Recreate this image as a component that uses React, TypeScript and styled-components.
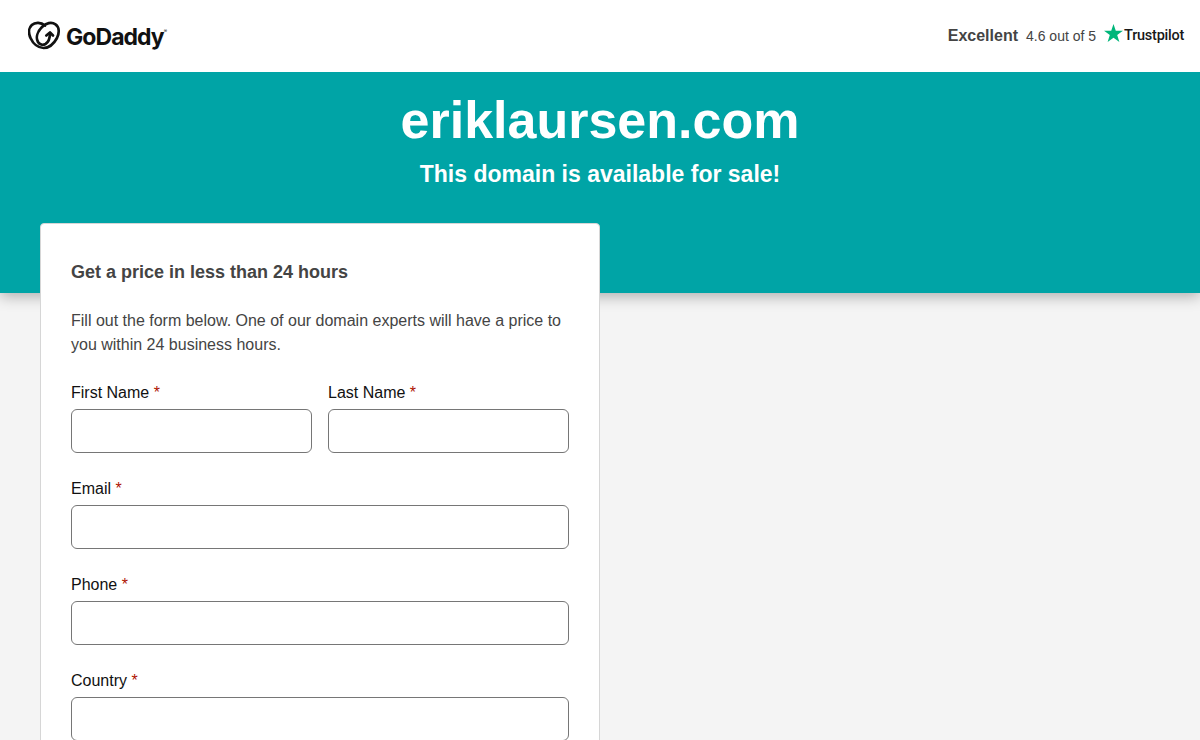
import React from 'react';
import styled, { createGlobalStyle } from 'styled-components';

const Global = createGlobalStyle`
    html, body {
        margin: 0;
        height: 740px;
        overflow: hidden;
        background: #f4f4f4;
        font-family: "Liberation Sans", Arial, sans-serif;
    }
`;
const Page = styled.div`
    height: 740px;
    overflow: hidden;
`;
const Header = styled.header`
    position: relative;
    z-index: 1;
    display: flex;
    justify-content: space-between;
    align-items: center;
    height: 72px;
    background: #fff;
    padding: 0 16px 0 28px;
    box-sizing: border-box;
`;
const Logo = styled.div`
    display: flex;
    align-items: center;
    gap: 5px;
    margin-top: 1px;
    svg {
        margin-top: -2px;
    }
`;
const LogoWord = styled.span`
    font-family: "Inter", "Liberation Sans", sans-serif;
    font-size: 23px;
    font-weight: 700;
    letter-spacing: -0.95px;
    color: #111;
    sup {
        font-size: 5px;
        font-weight: 400;
        letter-spacing: 0;
        vertical-align: 12px;
        line-height: 0;
    }
`;
const Rating = styled.div`
    display: flex;
    align-items: center;
    margin-top: -2px;
`;
const Excellent = styled.strong`
    font-size: 16px;
    color: #444;
    margin-right: 8px;
    margin-top: 1px;
`;
const Score = styled.span`
    font-size: 14px;
    color: #444;
    margin-right: 8px;
    margin-top: 2px;
`;
const Trustpilot = styled.span`
    display: flex;
    align-items: center;
    gap: 1px;
    font-size: 14.5px;
    font-weight: 500;
    letter-spacing: -0.25px;
    color: #191919;
    font-family: "Roboto", "Liberation Sans", sans-serif;
    svg {
        margin-top: -5px;
    }
`;
const Hero = styled.section`
    height: 221px;
    background: #00a4a6;
    box-shadow: 0 3px 14px rgba(0, 0, 0, 0.3);
    text-align: center;
    color: #fff;
    padding-top: 18px;
    box-sizing: border-box;
`;
const Domain = styled.h1`
    margin: 0;
    font-size: 52px;
    line-height: 60px;
    font-weight: 700;
`;
const Tagline = styled.h2`
    margin: 10px 0 0;
    font-size: 23px;
    line-height: 28px;
    font-weight: 700;
`;
const Card = styled.form`
    position: relative;
    width: 560px;
    margin: -70px 0 0 40px;
    padding: 36px 30px 40px;
    box-sizing: border-box;
    background: #fff;
    border: 1px solid #d6d6d6;
    border-radius: 4px;
`;
const Title = styled.h3`
    margin: 0;
    font-size: 18px;
    line-height: 24px;
    font-weight: 700;
    color: #444;
`;
const Intro = styled.p`
    margin: 25px 0 0;
    font-size: 16px;
    line-height: 24px;
    color: #444;
`;
const Fields = styled.div`
    display: grid;
    grid-template-columns: 1fr 1fr;
    gap: 26px 16px;
    margin-top: 26px;
`;
const Field = styled.label<{ $wide?: boolean }>`
    display: flex;
    flex-direction: column;
    grid-column: ${(p) => (p.$wide ? '1 / -1' : 'auto')};
    font-size: 16px;
    line-height: 20px;
    color: #111;
`;
const Required = styled.span`
    color: #ae1302;
`;
const Input = styled.input`
    height: 44px;
    margin-top: 6px;
    padding: 0 10px;
    box-sizing: border-box;
    width: 100%;
    border: 1px solid #767676;
    border-radius: 6px;
    background: #fff;
`;

const GoDaddyMark = () => (
    <svg width="33" height="29" viewBox="0 0 33 29" fill="none" stroke="#111" strokeWidth="2.7" strokeLinecap="round" strokeLinejoin="round">
        <path d="M17 4.500C13 1 7 1 3.800 4 .5 7 .5 12.500 2.500 17 5 22.500 10 27 15.500 27 21 27 26 22.500 29 17 31.500 12 31.500 6 27.500 3.300 23.500.7 18 2 14 6 9.500 10.500 7.500 16.500 10 21 11.500 23.500 14.500 24.500 17.500 23 20 21.500 22 17.500 22 12" />
        <path d="M18.300 14.500L22 11.500l3 3" />
    </svg>
);

const Star = () => (
    <svg width="19" height="18" viewBox="0 0 20 19">
        <path fill="#00b67a" d="M10 0l2.400 7.200H20l-6.100 4.500 2.300 7.300-6.200-4.500L3.800 19l2.300-7.300L0 7.200h7.600z" />
    </svg>
);

export default function App() {
    return (
        <Page>
            <Global />
            <Header>
                <Logo>
                    <GoDaddyMark />
                    <LogoWord>GoDaddy<sup>®</sup></LogoWord>
                </Logo>
                <Rating>
                    <Excellent>Excellent</Excellent>
                    <Score>4.6 out of 5</Score>
                    <Trustpilot><Star />Trustpilot</Trustpilot>
                </Rating>
            </Header>
            <Hero>
                <Domain>eriklaursen.com</Domain>
                <Tagline>This domain is available for sale!</Tagline>
            </Hero>
            <Card>
                <Title>Get a price in less than 24 hours</Title>
                <Intro>Fill out the form below. One of our domain experts will have a price to you within 24 business hours.</Intro>
                <Fields>
                    <Field>
                        <span>First Name <Required>*</Required></span>
                        <Input />
                    </Field>
                    <Field>
                        <span>Last Name <Required>*</Required></span>
                        <Input />
                    </Field>
                    <Field $wide>
                        <span>Email <Required>*</Required></span>
                        <Input />
                    </Field>
                    <Field $wide>
                        <span>Phone <Required>*</Required></span>
                        <Input />
                    </Field>
                    <Field $wide>
                        <span>Country <Required>*</Required></span>
                        <Input />
                    </Field>
                </Fields>
            </Card>
        </Page>
    );
}
